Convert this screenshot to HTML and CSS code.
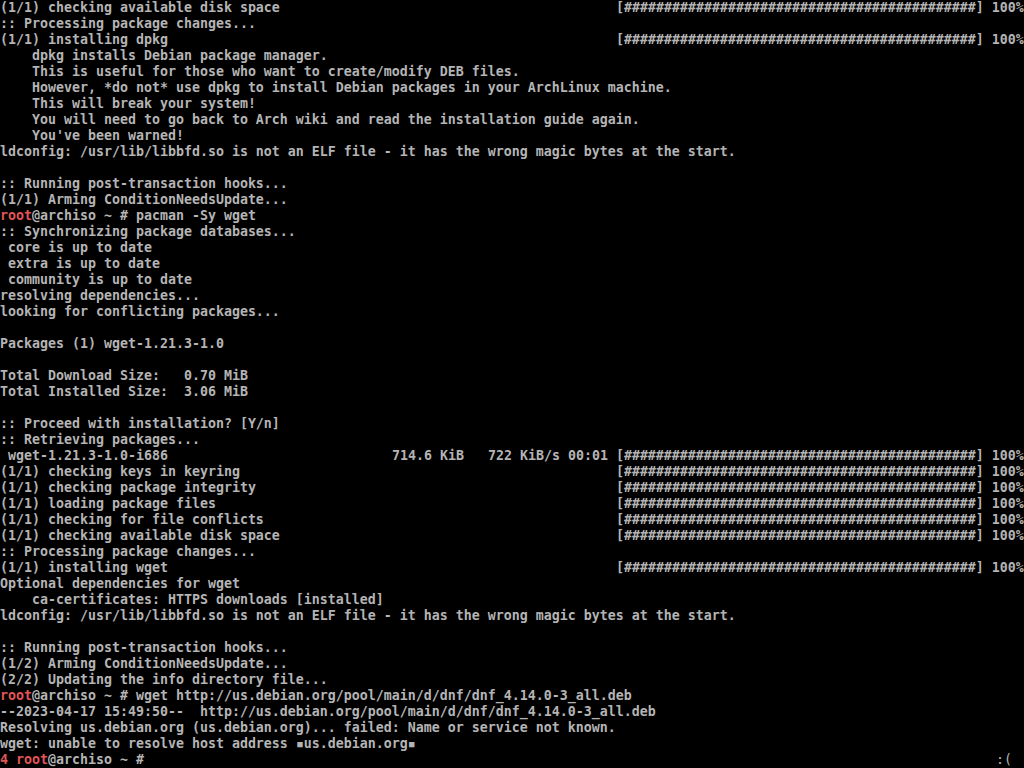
FILE: index.html
```html
<!DOCTYPE html>
<html>
	<head>
		<meta charset="UTF-8">
		<title>tty1 - archiso</title>
		<link rel="stylesheet" href="styles.css">
	</head>
	<body>
		<div class="console">
<div class="tty"><span class="col77">(1/1) checking available disk space</span>[############################################] 100%
:: Processing package changes...
<span class="col77">(1/1) installing dpkg</span>[############################################] 100%
    dpkg installs Debian package manager.
    This is useful for those who want to create/modify DEB files.
    However, *do not* use dpkg to install Debian packages in your ArchLinux machine.
    This will break your system!
    You will need to go back to Arch wiki and read the installation guide again.
    You've been warned!
ldconfig: /usr/lib/libbfd.so is not an ELF file - it has the wrong magic bytes at the start.

:: Running post-transaction hooks...
(1/1) Arming ConditionNeedsUpdate...
<span class="user">root</span>@archiso ~ # pacman -Sy wget
:: Synchronizing package databases...
 core is up to date
 extra is up to date
 community is up to date
resolving dependencies...
looking for conflicting packages...

Packages (1) wget-1.21.3-1.0

Total Download Size:   0.70 MiB
Total Installed Size:  3.06 MiB

:: Proceed with installation? [Y/n]
:: Retrieving packages...
<span class="col49"> wget-1.21.3-1.0-i686</span>714.6 KiB   722 KiB/s 00:01 [############################################] 100%
<span class="col77">(1/1) checking keys in keyring</span>[############################################] 100%
<span class="col77">(1/1) checking package integrity</span>[############################################] 100%
<span class="col77">(1/1) loading package files</span>[############################################] 100%
<span class="col77">(1/1) checking for file conflicts</span>[############################################] 100%
<span class="col77">(1/1) checking available disk space</span>[############################################] 100%
:: Processing package changes...
<span class="col77">(1/1) installing wget</span>[############################################] 100%
Optional dependencies for wget
    ca-certificates: HTTPS downloads [installed]
ldconfig: /usr/lib/libbfd.so is not an ELF file - it has the wrong magic bytes at the start.

:: Running post-transaction hooks...
(1/2) Arming ConditionNeedsUpdate...
(2/2) Updating the info directory file...
<span class="user">root</span>@archiso ~ # wget http://us.debian.org/pool/main/d/dnf/dnf_4.14.0-3_all.deb
--2023-04-17 15:49:50--  http://us.debian.org/pool/main/d/dnf/dnf_4.14.0-3_all.deb
Resolving us.debian.org (us.debian.org)... failed: Name or service not known.
wget: unable to resolve host address <span class="blk">■</span>us.debian.org<span class="blk">■</span></div>
<div class="prompt"><span><span class="user">4 root</span>@archiso ~ #</span><span class="rprompt">:(</span></div>
		</div>
	</body>
</html>
```

FILE: styles.css
```css
html, body {
	margin: 0;
	padding: 0;
	background: #000;
}
.console {
	width: 1024px;
	height: 768px;
	overflow: hidden;
	color: #b4b4b4;
	font-family: "DejaVu Sans Mono", "Liberation Mono", monospace;
	font-size: 13.29px;
	font-weight: bold;
	line-height: 16px;
}
.tty {
	white-space: pre;
}
.col77 {
	display: inline-block;
	width: 616px;
}
.col49 {
	display: inline-block;
	width: 392px;
}
.user {
	color: #e05555;
}
.blk {
	display: inline-block;
	width: 8px;
	font-size: 9px;
	text-align: center;
	vertical-align: top;
}
.prompt {
	display: flex;
	justify-content: space-between;
	white-space: pre;
	padding-right: 12px;
}
.rprompt {
	font-weight: normal;
}
```
